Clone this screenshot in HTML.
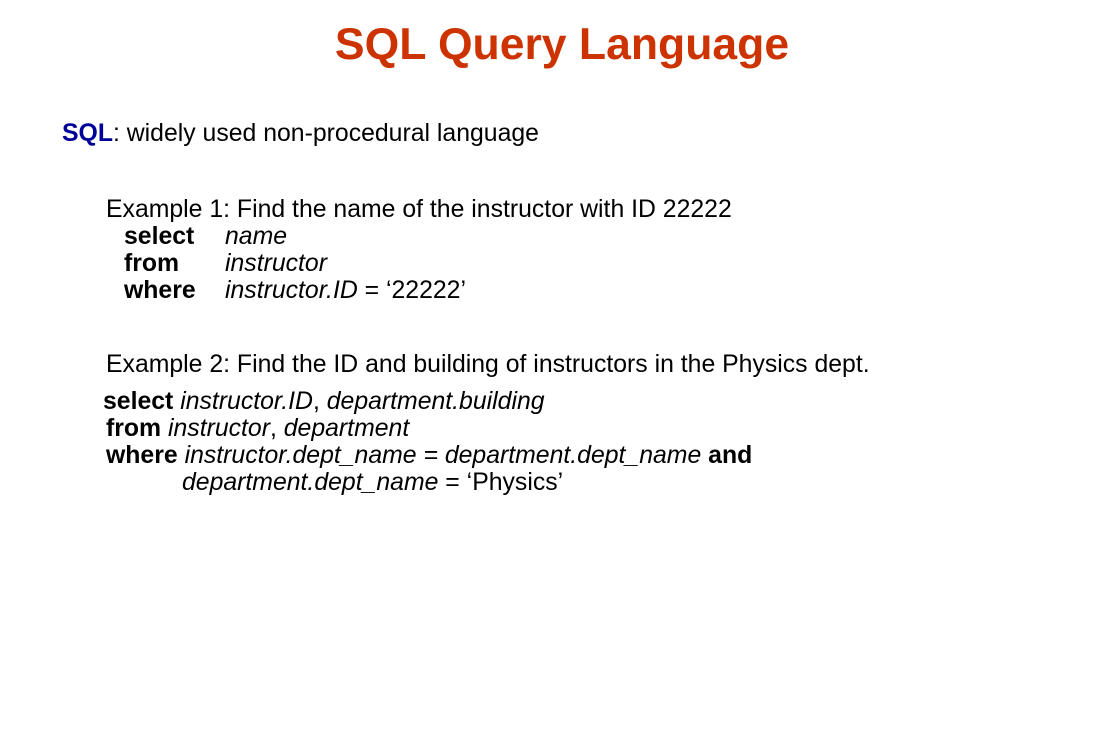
<!DOCTYPE html>
<html><head><meta charset="utf-8"><style>
html,body{margin:0;padding:0;background:#fff;}
body{width:1120px;height:750px;position:relative;overflow:hidden;font-family:"Liberation Sans",Arial,sans-serif;color:#000;}
.l{position:absolute;white-space:nowrap;font-size:24.8px;line-height:1;}
.t{position:absolute;left:0;width:1120px;text-align:center;top:23px;font-size:44.5px;font-weight:bold;color:#cc3300;line-height:1;}
b{font-weight:bold}
</style></head><body>
<div class="t"><span style="position:relative;left:2px">SQL Query Language</span></div>
<div class="l" style="left:62px;top:122px"><b style="color:#000099">SQL</b>: widely used non-procedural language</div>
<div class="l" style="left:106px;top:198px">Example 1: Find the name of the instructor with ID 22222</div>
<div class="l" style="left:124px;top:225px"><b>select</b></div><div class="l" style="left:225px;top:225px"><i>name</i></div>
<div class="l" style="left:124px;top:252px"><b>from</b></div><div class="l" style="left:225px;top:252px"><i>instructor</i></div>
<div class="l" style="left:124px;top:279px"><b>where</b></div><div class="l" style="left:225px;top:279px"><i>instructor.ID</i> = ‘22222’</div>
<div class="l" style="left:106px;top:353px">Example 2: Find the ID and building of instructors in the Physics dept.</div>
<div class="l" style="left:103px;top:390px"><b>select</b> <i>instructor.ID</i>, <i>department.building</i></div>
<div class="l" style="left:106px;top:417px"><b>from</b> <i>instructor</i>, <i>department</i></div>
<div class="l" style="left:106px;top:444px"><b>where</b> <i>instructor.dept_name = department.dept_name</i> <b>and</b></div>
<div class="l" style="left:182px;top:471px"><i>department.dept_name</i> = ‘Physics’</div>
</body></html>
